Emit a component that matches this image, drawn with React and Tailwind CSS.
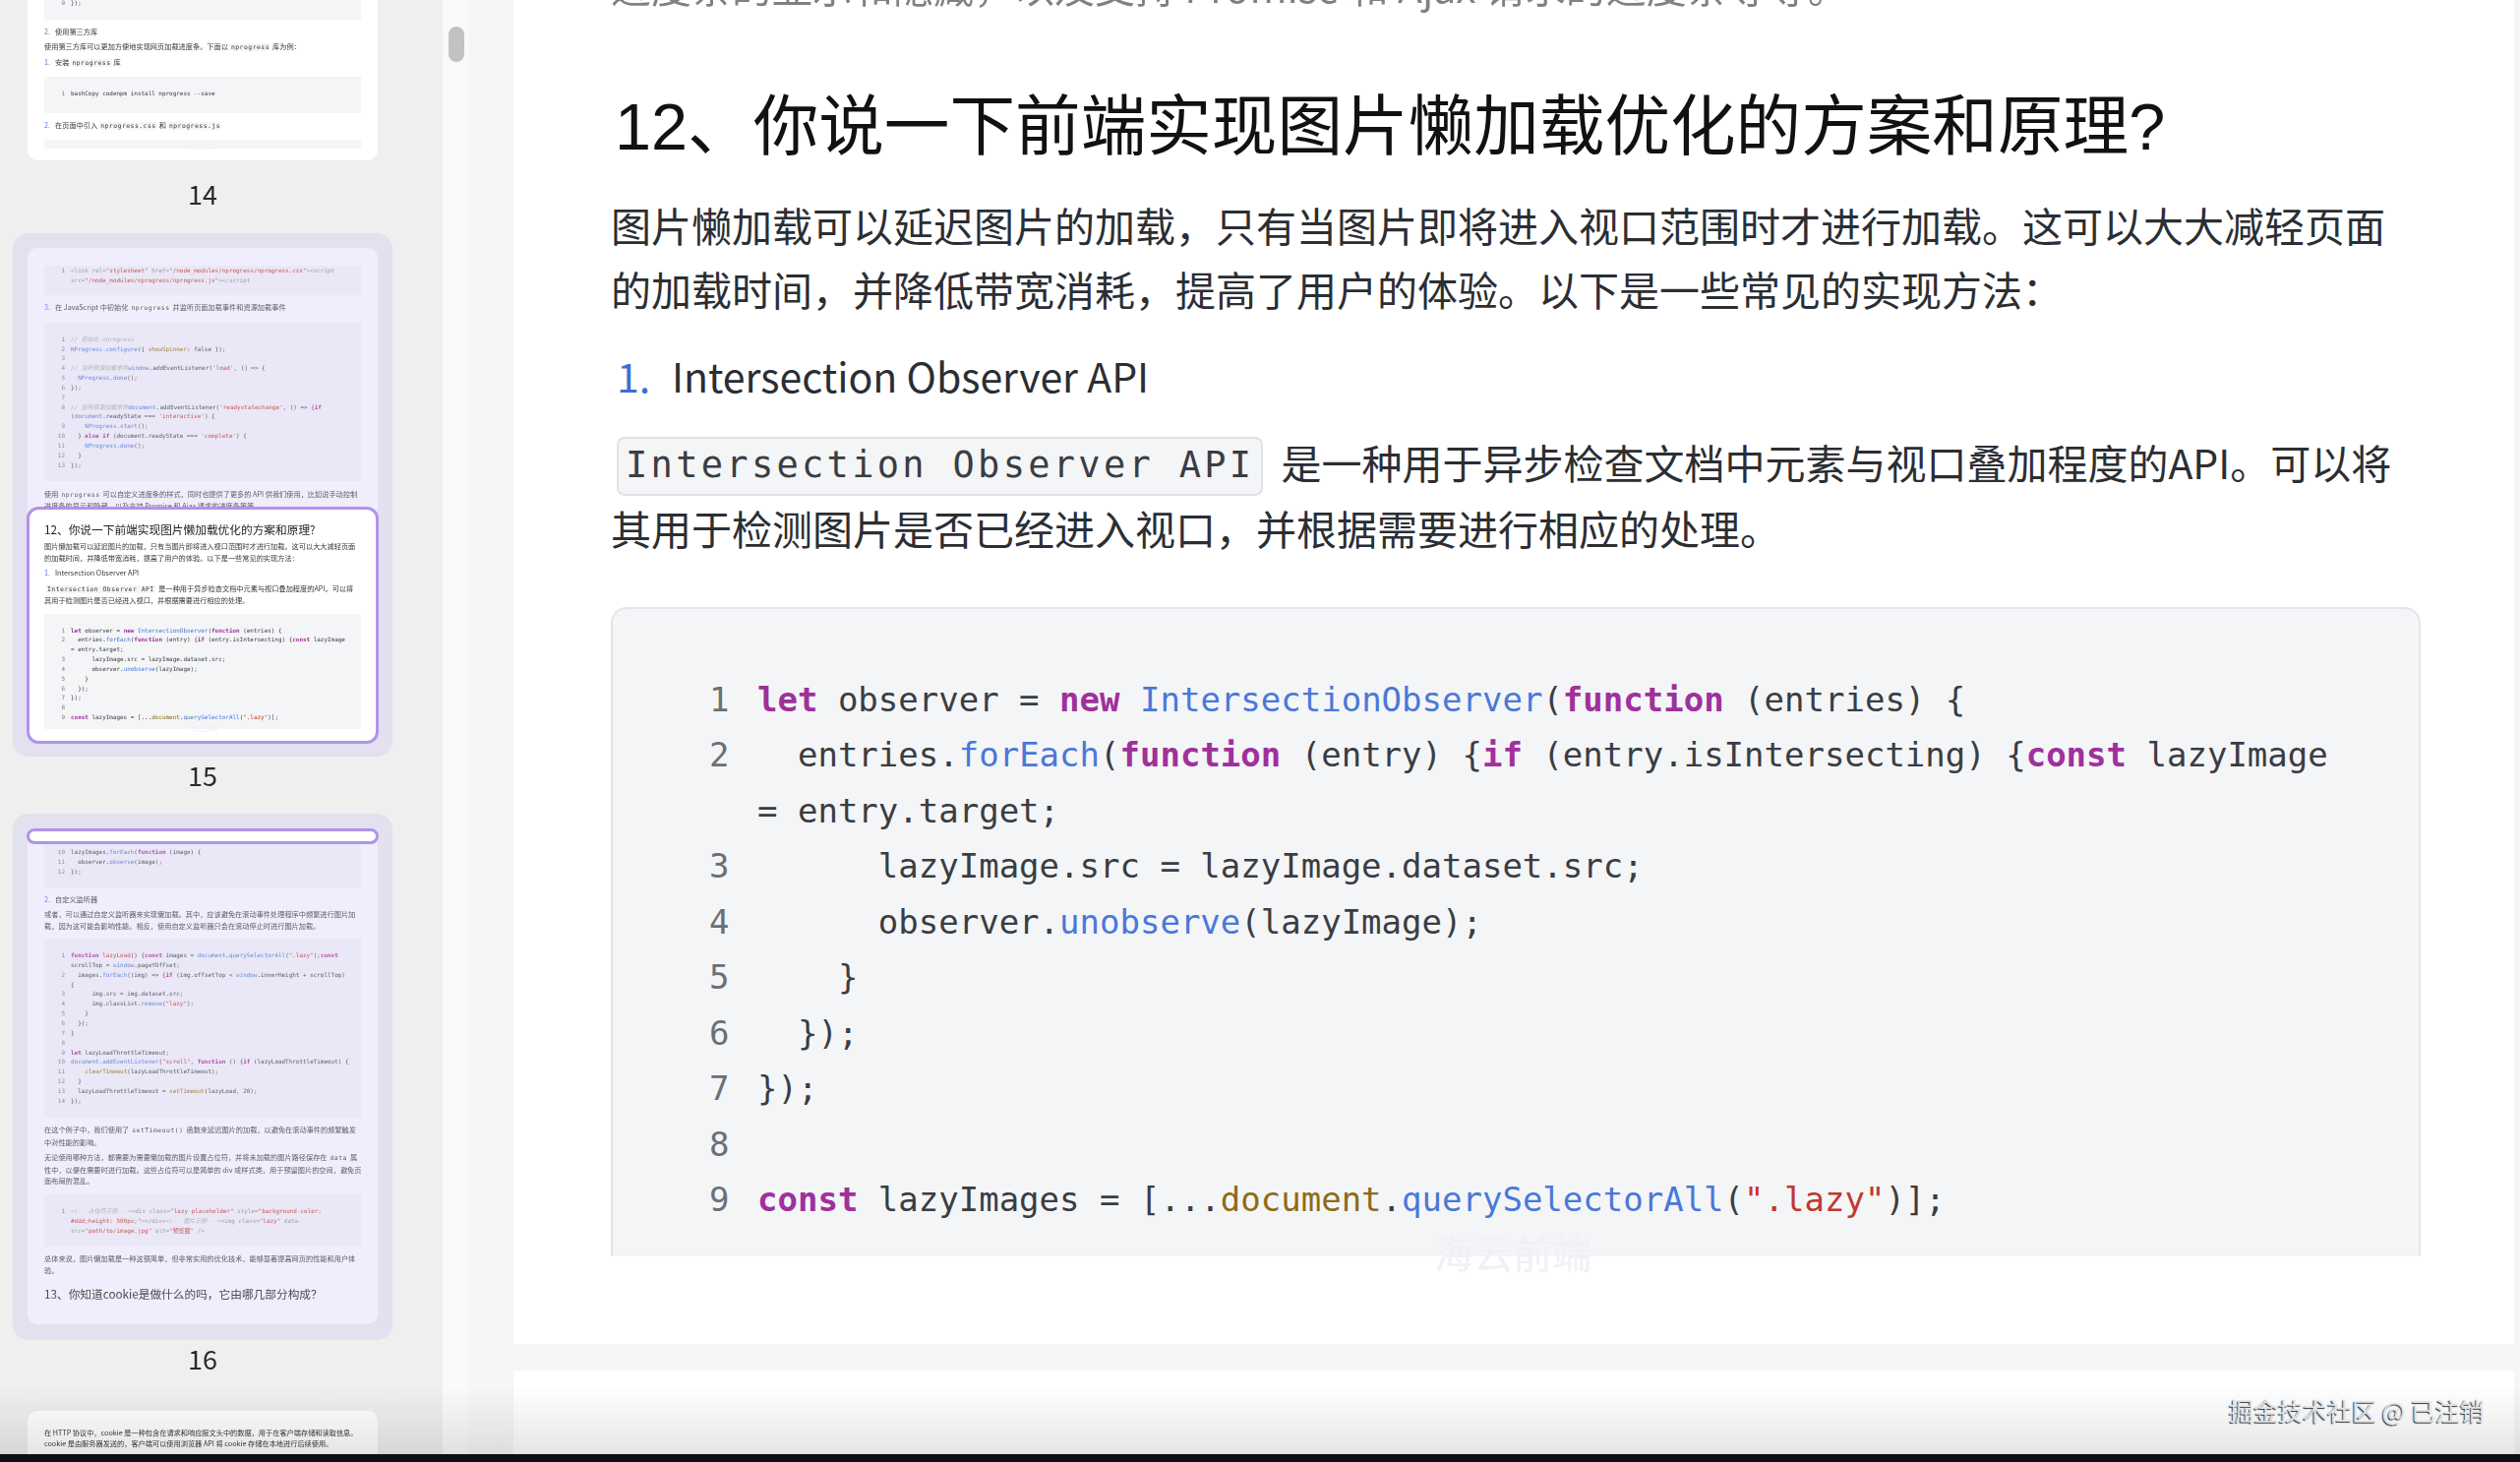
const kw = 'text-[#a0309b] font-bold'
const fn = 'text-[#4a78d8]'
const str = 'text-[#c0392b]'
const bi = 'text-[#8f6b14]'
const cm = 'text-[#a3a8ae] italic'
const tag = 'text-[#8b9096]'

function Tokens({ parts }) {
  return parts.map((p, i) =>
    typeof p === 'string' ? <span key={i}>{p}</span> : <span key={i} className={p[0]}>{p[1]}</span>
  )
}

const mainCode = [
  { n: 1, t: [[kw, 'let'], ' observer = ', [kw, 'new'], ' ', [fn, 'IntersectionObserver'], '(', [kw, 'function'], ' (entries) {'] },
  { n: 2, t: ['  entries.', [fn, 'forEach'], '(', [kw, 'function'], ' (entry) {', [kw, 'if'], ' (entry.isIntersecting) {', [kw, 'const'], ' lazyImage = entry.target;'] },
  { n: 3, t: ['      lazyImage.src = lazyImage.dataset.src;'] },
  { n: 4, t: ['      observer.', [fn, 'unobserve'], '(lazyImage);'] },
  { n: 5, t: ['    }'] },
  { n: 6, t: ['  });'] },
  { n: 7, t: ['});'] },
  { n: 8, t: [' '] },
  { n: 9, t: [[kw, 'const'], ' lazyImages = [...', [bi, 'document'], '.', [fn, 'querySelectorAll'], '(', [str, '".lazy"'], ')];'] },
]

// thumbnail pieces
function TLine({ children, className = '' }) {
  return <div className={`text-[7.2px] leading-[11.4px] whitespace-nowrap text-[#33363b] ${className}`}>{children}</div>
}

function TMono({ children }) {
  return <span className="font-['DejaVu_Sans_Mono','Noto_Sans_CJK_SC',monospace] text-[6.4px] tracking-[0.5px] bg-[#f0f1f3]/70 mx-[2px] px-[1px]">{children}</span>
}

function TItem({ n, children, className = '' }) {
  return (
    <TLine className={className}>
      <span className="text-[#4a78d8] inline-block w-[11px]">{n}.</span>
      {children}
    </TLine>
  )
}

function THead({ children, className = '' }) {
  return <div className={`text-[11.7px] leading-[20px] whitespace-nowrap text-[#222] ${className}`}>{children}</div>
}

function TCode({ rows, className = '', tint }) {
  return (
    <div className={`${tint ? 'bg-[#e9e6f6]' : 'bg-[#f4f5f7]'} font-['DejaVu_Sans_Mono','Noto_Sans_CJK_SC',monospace] text-[5.95px] leading-[9.85px] text-[#3a3d42] whitespace-pre overflow-hidden ${className}`}>
      {rows.map((r, i) => (
        <div key={i} className="flex">
          <span className="w-[21px] text-right text-[#777b82] shrink-0">{r[0]}</span>
          <span className="ml-[6px]"><Tokens parts={r[1]} /></span>
        </div>
      ))}
    </div>
  )
}

function Label({ n, className = '' }) {
  return <div className={`mt-[6px] h-[26px] leading-[26px] text-center text-[27px] text-[#2a2a2a] ${className}`}>{n}</div>
}

function TMark({ className = '' }) {
  return <div className={`absolute left-[163px] text-[7px] text-[#f0f0f6] ${className}`}>海云前端</div>
}

function CurrentPageThumb() {
  return (
    <div className="border-[3px] border-[#b094ea] rounded-[12px] bg-white h-[241px] -mx-px px-[15px] pt-[10px] overflow-hidden relative">
      <THead>12、你说一下前端实现图片懒加载优化的方案和原理?</THead>
      <div className="mt-[2.3px]">
        <TLine>图片懒加载可以延迟图片的加载，只有当图片即将进入视口范围时才进行加载。这可以大大减轻页面</TLine>
        <TLine>的加载时间，并降低带宽消耗，提高了用户的体验。以下是一些常见的实现方法：</TLine>
      </div>
      <TItem n={1} className="mt-[3.6px]">Intersection Observer API</TItem>
      <div className="mt-[4.6px]">
        <TLine><TMono>Intersection Observer API</TMono> 是一种用于异步检查文档中元素与视口叠加程度的API。可以将</TLine>
        <TLine>其用于检测图片是否已经进入视口，并根据需要进行相应的处理。</TLine>
      </div>
      <TCode
        className="mt-[7px] h-[117px] pt-[12px] w-[322px]"
        rows={[
          [1, [[kw, 'let'], ' observer = ', [kw, 'new'], ' ', [fn, 'IntersectionObserver'], '(', [kw, 'function'], ' (entries) {']],
          [2, ['  entries.', [fn, 'forEach'], '(', [kw, 'function'], ' (entry) {', [kw, 'if'], ' (entry.isIntersecting) {', [kw, 'const'], ' lazyImage']],
          ['', ['= entry.target;']],
          [3, ['      lazyImage.src = lazyImage.dataset.src;']],
          [4, ['      observer.', [fn, 'unobserve'], '(lazyImage);']],
          [5, ['    }']],
          [6, ['  });']],
          [7, ['});']],
          [8, [' ']],
          [9, [[kw, 'const'], ' lazyImages = [...', [bi, 'document'], '.', [fn, 'querySelectorAll'], '(', [str, '".lazy"'], ')];']],
        ]}
      />
      <TMark className="top-[217px]" />
    </div>
  )
}

function Sidebar() {
  return (
    <div className="w-[450px] h-full bg-[#efefef] pl-[13px] pr-[51px] overflow-hidden shrink-0 blur-[0.3px]">
      {/* page 14, scrolled past the top */}
      <div className="pb-[15px] px-[15px]">
        <div className="bg-white rounded-b-[10px] h-[163px] px-[17px] overflow-hidden relative">
          <TCode className="-mt-[2px] h-[22px] w-[322px]" rows={[[9, ['});']]]} />
          <TItem n={2} className="mt-[6.8px]">使用第三方库</TItem>
          <TLine className="mt-[4px]">使用第三方库可以更加方便地实现网页加载进度条。下面以<TMono>nprogress</TMono>库为例：</TLine>
          <TItem n={1} className="mt-[3.6px]">安装<TMono>nprogress</TMono>库</TItem>
          <TCode className="mt-[7.3px] h-[37px] pt-[12px] w-[322px]" rows={[[1, ['bashCopy codenpm install nprogress --save']]]} />
          <TItem n={2} className="mt-[7.3px]">在页面中引入<TMono>nprogress.css</TMono>和<TMono>nprogress.js</TMono></TItem>
          <div className="mt-[7.3px] h-[9px] w-[322px] bg-[#f4f5f7]" />
          <TMark className="top-[143px]" />
        </div>
      </div>
      <Label n={14} className="mb-[27px]" />

      {/* page 15 */}
      <div className="h-[532px] p-[15px] rounded-[16px] bg-[#e3e0ef]">
        <div className="bg-[#f0edfc] rounded-[10px]">
          <div className="h-[263px] px-[17px] pt-[18px] overflow-hidden opacity-80">
            <TCode
              tint
              className="h-[30px] w-[322px]"
              rows={[
                [1, [[tag, '<link rel='], [str, '"stylesheet"'], [tag, ' href='], [str, '"/node_modules/nprogress/nprogress.css"'], [tag, '><script']]],
                ['', [[tag, 'src='], [str, '"/node_modules/nprogress/nprogress.js"'], [tag, '></script']]],
              ]}
            />
            <TItem n={3} className="mt-[7px]">在 JavaScript 中初始化<TMono>nprogress</TMono>并监听页面加载事件和资源加载事件</TItem>
            <TCode
              tint
              className="mt-[8.3px] h-[161px] pt-[12px] w-[322px]"
              rows={[
                [1, [[cm, '// 初始化 nprogress']]],
                [2, [[fn, 'NProgress.configure'], '({ ', [bi, 'showSpinner'], ': false });']],
                [3, [' ']],
                [4, [[cm, '// 监听资源加载事件'], [fn, 'window'], '.addEventListener(', [str, "'load'"], ', () => {']],
                [5, ['  ', [fn, 'NProgress.done'], '();']],
                [6, ['});']],
                [7, [' ']],
                [8, [[cm, '// 监听资源加载事件'], [fn, 'document'], '.addEventListener(', [str, "'readystatechange'"], ', () => {', [kw, 'if']]],
                ['', ['(', [fn, 'document'], '.readyState === ', [str, "'interactive'"], ') {']],
                [9, ['    ', [fn, 'NProgress.start'], '();']],
                [10, ['  } ', [kw, 'else if'], ' (document.readyState === ', [str, "'complete'"], ') {']],
                [11, ['    ', [fn, 'NProgress.done'], '();']],
                [12, ['  }']],
                [13, ['});']],
              ]}
            />
            <div className="mt-[8.3px]">
              <TLine>使用<TMono>nprogress</TMono>可以自定义进度条的样式，同时也提供了更多的 API 供我们使用，比如说手动控制</TLine>
              <TLine>进度条的显示和隐藏，以及支持 Promise 和 Ajax 请求的进度条等等。</TLine>
            </div>
          </div>
          <CurrentPageThumb />
        </div>
      </div>
      <Label n={15} className="mb-[26px]" />

      {/* page 16 */}
      <div className="h-[535px] p-[15px] rounded-[16px] bg-[#e3e0ef]">
        <div className="bg-[#f0edfc] rounded-[10px] h-[504px] relative">
          <div className="h-[16px] -mx-px rounded-[10px] border-[3px] border-[#b094ea] bg-white" />
          <div className="px-[17px] opacity-80">
            <TCode
              tint
              className="h-[44px] pt-[3px] w-[322px]"
              rows={[
                [10, ['lazyImages.', [fn, 'forEach'], '(', [kw, 'function'], ' (image) {']],
                [11, ['  observer.', [fn, 'observe'], '(image);']],
                [12, ['});']],
              ]}
            />
            <TItem n={2} className="mt-[7.3px]">自定义监听器</TItem>
            <div className="mt-[3.6px]">
              <TLine>或者，可以通过自定义监听器来实现懒加载。其中，应该避免在滚动事件处理程序中频繁进行图片加</TLine>
              <TLine>载，因为这可能会影响性能。相反，使用自定义监听器只会在滚动停止时进行图片加载。</TLine>
            </div>
            <TCode
              tint
              className="mt-[7px] h-[182px] pt-[12px] w-[322px]"
              rows={[
                [1, [[kw, 'function'], ' ', [str, 'lazyLoad'], '() {', [kw, 'const'], ' images = ', [fn, 'document'], '.', [fn, 'querySelectorAll'], '(', [str, '".lazy"'], ');', [kw, 'const']]],
                ['', ['scrollTop = ', [fn, 'window'], '.pageYOffset;']],
                [2, ['  images.', [fn, 'forEach'], '((img) => {', [kw, 'if'], ' (img.offsetTop < ', [fn, 'window'], '.innerHeight + scrollTop)']],
                ['', ['{']],
                [3, ['      img.src = img.dataset.src;']],
                [4, ['      img.classList.', [fn, 'remove'], '(', [str, '"lazy"'], ');']],
                [5, ['    }']],
                [6, ['  });']],
                [7, ['}']],
                [8, [' ']],
                [9, [[kw, 'let'], ' lazyLoadThrottleTimeout;']],
                [10, [[fn, 'document.addEventListener'], '(', [str, '"scroll"'], ', ', [kw, 'function'], ' () {', [kw, 'if'], ' (lazyLoadThrottleTimeout) {']],
                [11, ['    ', [bi, 'clearTimeout'], '(lazyLoadThrottleTimeout);']],
                [12, ['  }']],
                [13, ['  lazyLoadThrottleTimeout = ', [bi, 'setTimeout'], '(lazyLoad, 20);']],
                [14, ['});']],
              ]}
            />
            <div className="mt-[7.3px]">
              <TLine>在这个例子中，我们使用了<TMono>setTimeout()</TMono>函数来延迟图片的加载，以避免在滚动事件的频繁触发</TLine>
              <TLine>中对性能的影响。</TLine>
            </div>
            <div className="mt-[4.2px]">
              <TLine>无论使用哪种方法，都需要为需要懒加载的图片设置占位符，并将未加载的图片路径保存在<TMono>data</TMono>属</TLine>
              <TLine>性中，以便在需要时进行加载。这些占位符可以是简单的 div 或样式类，用于预留图片的空间，避免页</TLine>
              <TLine>面布局的混乱。</TLine>
            </div>
            <TCode
              tint
              className="mt-[7.5px] h-[53px] pt-[12px] w-[322px]"
              rows={[
                [1, [[cm, '<!-- 占位符示例 -->'], [tag, '<div class='], [str, '"lazy-placeholder"'], [tag, ' style='], [str, '"background-color:']]],
                ['', [[str, '#ddd;height: 500px;"'], [tag, '></div>'], [cm, '<!-- 图片示例 -->'], [tag, '<img class='], [str, '"lazy"'], [tag, ' data-']]],
                ['', [[tag, 'src='], [str, '"path/to/image.jpg"'], [tag, ' alt='], [str, '"预览图"'], [tag, ' />']]],
              ]}
            />
            <div className="mt-[7.3px]">
              <TLine>总体来说，图片懒加载是一种这很简单，但非常实用的优化技术，能够显著提高网页的性能和用户体</TLine>
              <TLine>验。</TLine>
            </div>
            <THead className="mt-[8px]">13、你知道cookie是做什么的吗，它由哪几部分构成？</THead>
          </div>
        </div>
      </div>
      <Label n={16} className="mb-[25px]" />

      {/* page 17 */}
      <div className="px-[15px] pt-[15px]">
        <div className="bg-white rounded-t-[10px] h-[60px] px-[17px] pt-[17px]">
          <TLine>在 HTTP 协议中，cookie 是一种包含在请求和响应报文头中的数据，用于在客户端存储和读取信息。</TLine>
          <TLine>cookie 是由服务器发送的，客户端可以使用浏览器 API 将 cookie 存储在本地进行后续使用。</TLine>
        </div>
      </div>
    </div>
  )
}

function Document() {
  return (
    <div className="flex-1 h-full bg-[#f6f6f6] pl-[46px] pr-[6px] overflow-hidden">
      <div className="relative h-[1366px] bg-white overflow-hidden pl-[99px] text-[#2b2e33]">
        <p className="-mt-[47px] text-[41px] leading-[65.4px] whitespace-nowrap opacity-60">进度条的显示和隐藏，以及支持 Promise 和 Ajax 请求的进度条等等。</p>
        <h2 className="mt-[66px] ml-[4px] font-['Liberation_Sans','Noto_Sans_CJK_SC',sans-serif] text-[66.6px] leading-[90px] text-[#111] whitespace-nowrap">
          12、你说一下前端实现图片懒加载优化的方案和原理?
        </h2>
        <p className="mt-[21.4px] w-[1840px] text-[41px] leading-[65.4px]">
          图片懒加载可以延迟图片的加载，只有当图片即将进入视口范围时才进行加载。这可以大大减轻页面的加载时间，并降低带宽消耗，提高了用户的体验。以下是一些常见的实现方法：
        </p>
        <div className="mt-[22px] flex text-[41px] leading-[65.4px]">
          <span className="w-[62px] pl-[6px] text-[#3b6fd6]">1.</span>
          <span>Intersection Observer API</span>
        </div>
        <p className="mt-[23px] w-[1840px] text-[41px] leading-[65.4px]">
          <code className="inline-block align-top mt-[6.5px] h-[60px] leading-[54px] ml-[6px] mr-[18px] px-[7px] border-2 border-[#e0e2e5] rounded-[8px] bg-[#f4f5f7] font-['DejaVu_Sans_Mono',monospace] text-[37px] tracking-[3.3px] text-[#3a3d42]">Intersection Observer API</code>
          是一种用于异步检查文档中元素与视口叠加程度的API。可以将其用于检测图片是否已经进入视口，并根据需要进行相应的处理。
        </p>
        <div className="mt-[47.6px] w-[1840px] h-[660px] overflow-hidden border-2 border-b-0 border-[#e3e5e8] rounded-t-[16px] bg-[#f4f5f7] pt-[64px] pl-[98px] font-['DejaVu_Sans_Mono',monospace] text-[34px] leading-[56.5px] text-[#3a3d42]">
          {mainCode.map(row => (
            <div key={row.n} className="flex">
              <span className="w-[49px] shrink-0 text-[#6b6f76]">{row.n}</span>
              <span className="w-[1610px] whitespace-pre-wrap"><Tokens parts={row.t} /></span>
            </div>
          ))}
        </div>
        <div className="absolute left-[936px] top-[1247px] text-[40px] leading-[50px] text-[#f0f0f7]">海云前端</div>
      </div>
      <div className="mt-[27px] h-[200px] bg-white" />
    </div>
  )
}

export default function App() {
  return (
    <div className="relative w-[2562px] h-[1486px] overflow-hidden bg-[#0d1117] font-['Noto_Sans_CJK_SC',sans-serif]">
      <div className="flex h-[1478px]">
        <Sidebar />
        <div className="w-[26px] h-full bg-[#fafafa] pt-[27px] px-[6px] shrink-0">
          <div className="w-[16px] h-[36px] rounded-full bg-[#c2c2c2]" />
        </div>
        <Document />
      </div>
      <div className="h-[8px] bg-[#0d1117]" />

      {/* player fade and site watermark sit over the pages */}
      <div className="absolute left-0 right-0 bottom-[8px] h-[70px] bg-gradient-to-t from-black/10 to-transparent" />
      <div className="absolute left-[2266px] top-[1416px] text-[25px] leading-[34px] whitespace-nowrap text-[#e2e2e2] [text-shadow:-1px_1px_1px_#333]">
        掘金技术社区 @ 已注销
      </div>
    </div>
  )
}
